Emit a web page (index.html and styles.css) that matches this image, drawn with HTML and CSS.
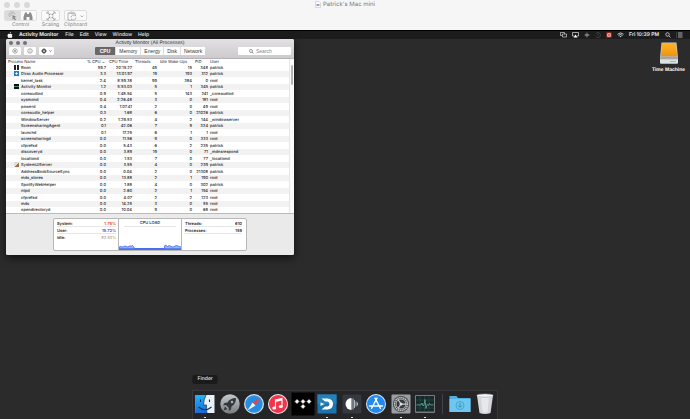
FILE: index.html
```html
<!DOCTYPE html>
<html lang="en">
<head>
<meta charset="utf-8">
<title>Patrick's Mac mini</title>
<link rel="stylesheet" href="styles.css">
</head>
<body>
<header class="viewer">
  <div class="viewer-left">
    <div class="lights light"><i></i><i></i><i></i></div>
    <div class="tools">
      <div class="tool">
        <div class="segmented">
          <button class="on" aria-label="Control"><svg width="10" height="10" viewBox="0 0 20 20"><path d="M9 8l8 4-4 1 3 4-2 2-3-4-2 3z" fill="#888"/><path d="M4 12a6 6 0 1 1 10-5M7 10a3 3 0 1 1 4-4" fill="none" stroke="#aaa" stroke-width="1.5"/></svg></button>
          <button aria-label="Observe"><svg width="10" height="10" viewBox="0 0 20 20" fill="#8c8c8c"><path d="M4 3h4v3h4V3h4l3 9v6h-6v-6H7v6H1v-6z"/></svg></button>
        </div>
        <span>Control</span>
      </div>
      <div class="tool">
        <button class="box" aria-label="Scaling"><svg width="10" height="10" viewBox="0 0 20 20" fill="none" stroke="#999" stroke-width="1.6"><path d="M2 6V2h4M14 2h4v4M18 14v4h-4M6 18H2v-4M4 4l4 4M16 4l-4 4M4 16l4-4M16 16l-4-4M8 5v3H5M12 5v3h3M8 15v-3H5M12 15v-3h3"/></svg></button>
        <span>Scaling</span>
      </div>
      <div class="tool">
        <button class="box wide" aria-label="Clipboard"><svg width="17" height="10" viewBox="0 0 34 20" fill="none" stroke="#999" stroke-width="1.5"><path d="M7 18H2V4h3l2-2h4l2 2h3v3M5 5h8"/><path d="M8 13a5 5 0 0 1 9-3v-3M18 13a5 5 0 0 1-9 3v3M27 9l3 3 3-3"/></svg></button>
        <span>Clipboard</span>
      </div>
    </div>
  </div>
  <h1 class="viewer-title"><svg width="6" height="7" viewBox="0 0 12 14"><path d="M1 1h7l3 3v9H1z" fill="#fff" stroke="#b5b5b5"/><path d="M3 6h6v4H3z" fill="#9c9ccb"/></svg>Patrick's Mac mini</h1>
</header>

<main class="screen">
  <nav class="menubar">
    <svg class="apple" width="6" height="6" viewBox="0 0 12 12" fill="#fff"><path d="M8 0c0 2-1 3-2 3 0-2 1-3 2-3zM6 4c1 0 3-1 5 1-2 1-1 4 0 4-1 2-2 3-3 3l-2-.5L4 12C2 12 1 9 1 7c0-3 3-4 5-3z"/></svg>
    <a href="#" class="app">Activity Monitor</a>
    <a href="#">File</a>
    <a href="#">Edit</a>
    <a href="#">View</a>
    <a href="#">Window</a>
    <a href="#">Help</a>
    <div class="status">
      <svg width="7" height="6" viewBox="0 0 14 12" fill="none" stroke="#ddd" stroke-width="1.3"><path d="M4 7H1V1h8v3M5 4h8v6H5z"/></svg>
      <svg width="7" height="6" viewBox="0 0 14 12"><path d="M4 8H1V1h12v7h-3" fill="none" stroke="#ddd" stroke-width="1.4"/><path d="M7 5l4 6H3z" fill="#fff"/></svg>
      <svg width="6" height="6" viewBox="0 0 12 12" stroke="#aaa" stroke-width="1.3"><path d="M1 6h10M4 3v6M6 1v10M8 4v4"/></svg>
      <svg width="6" height="6" viewBox="0 0 12 12" fill="none" stroke="#555" stroke-width="1.2"><path d="M2 3a5 5 0 1 1-1 4M6 3v3l2 1"/></svg>
      <svg width="6" height="6" viewBox="0 0 12 12"><path fill="#d8382c" d="M1 1h10v10H1z"/><path fill="#fff" d="M3 3h6v6H3z"/><path fill="#d8382c" d="M5 4h2v4H5zM4 5h4v2H4z"/></svg>
      <svg width="7" height="6" viewBox="0 0 14 12" fill="none" stroke="#fff" stroke-width="1.5"><path d="M1 4.500Q7-1 13 4.500M3 7q4-4 8 0"/><path d="M5 8.500q2-1.500 4 0l-2 2z" fill="#fff" stroke="none"/></svg>
      <time>Fri 10:39 PM</time>
      <svg width="6" height="6" viewBox="0 0 12 12" fill="none" stroke="#eee" stroke-width="1.4"><circle cx="5" cy="5" r="3.500"/><path d="M8 8l3 3"/></svg>
      <svg width="7" height="6" viewBox="0 0 14 12" stroke="#ddd" stroke-width="1.5"><path d="M1 2h1M4 2h9M1 6h1M4 6h9M1 10h1M4 10h9"/></svg>
    </div>
  </nav>

  <div class="desktop">
    <section class="window">
      <header class="titlebar">
        <div class="title-row">
          <div class="lights"><i></i><i></i><i></i></div>
          <h2>Activity Monitor (All Processes)</h2>
        </div>
        <div class="toolbar">
          <div class="actions">
            <button class="tb" aria-label="Quit process"><svg width="6" height="6" viewBox="0 0 12 12" fill="none" stroke="#888" stroke-width="1.400"><circle cx="6" cy="6" r="4.500"/><path d="M4 4l4 4M8 4l-4 4"/></svg></button>
            <button class="tb" aria-label="Inspect process"><svg width="6" height="6" viewBox="0 0 12 12" fill="none" stroke="#888" stroke-width="1.400"><circle cx="6" cy="6" r="4.500"/><path d="M6 3v1M6 5v4"/></svg></button>
            <button class="tb gear" aria-label="Actions"><svg width="12" height="6" viewBox="0 0 24 12" fill="none" stroke="#444"><circle cx="6" cy="6" r="3" stroke-width="2.500"/><path d="M6 0v2M6 10v2M0 6h2M10 6h2M2 2l1 1M10 10L9 9M10 2L9 3M2 10l1-1" stroke-width="1.500"/><path d="M17 5l2 2 2-2" stroke-width="1.400"/></svg></button>
          </div>
          <div class="tabs">
            <button class="on">CPU</button><button>Memory</button><button>Energy</button><button>Disk</button><button>Network</button>
          </div>
          <label class="search"><svg width="5" height="5" viewBox="0 0 10 10" fill="none" stroke="#666" stroke-width="1.300"><circle cx="4" cy="4" r="3"/><path d="M6 6l3 3"/></svg><input type="text" placeholder="Search" aria-label="Search"></label>
        </div>
      </header>

      <div class="list">
        <table>
          <colgroup><col class="c-name"><col class="c-cpu"><col class="c-time"><col class="c-threads"><col class="c-idle"><col class="c-pid"><col></colgroup>
          <thead><tr><th>Process Name</th><th>% CPU ⌄</th><th>CPU Time</th><th>Threads</th><th>Idle Wake Ups</th><th>PID</th><th>User</th></tr></thead>
          <tbody>
            <tr><td><i class="ico roon"></i>Roon</td><td>59.7</td><td>20:15.27</td><td>45</td><td>15</td><td>348</td><td>patrick</td></tr>
            <tr><td><i class="ico dirac"></i>Dirac Audio Processor</td><td>3.3</td><td>13:01.97</td><td>19</td><td>193</td><td>312</td><td>patrick</td></tr>
            <tr><td><i class="ico"></i>kernel_task</td><td>2.4</td><td>8:59.38</td><td>99</td><td>384</td><td>0</td><td>root</td></tr>
            <tr><td><i class="ico monitor"></i>Activity Monitor</td><td>1.2</td><td>5:53.03</td><td>5</td><td>1</td><td>345</td><td>patrick</td></tr>
            <tr><td><i class="ico"></i>coreaudiod</td><td>0.9</td><td>1:48.54</td><td>5</td><td>143</td><td>241</td><td>_coreaudiod</td></tr>
            <tr><td><i class="ico"></i>sysmond</td><td>0.4</td><td>2:26.48</td><td>3</td><td>0</td><td>181</td><td>root</td></tr>
            <tr><td><i class="ico"></i>powerd</td><td>0.4</td><td>1:07.41</td><td>2</td><td>0</td><td>49</td><td>root</td></tr>
            <tr><td><i class="ico"></i>coreaudio_helper</td><td>0.3</td><td>1.68</td><td>6</td><td>0</td><td>21026</td><td>patrick</td></tr>
            <tr><td><i class="ico"></i>WindowServer</td><td>0.2</td><td>1:29.53</td><td>4</td><td>2</td><td>144</td><td>_windowserver</td></tr>
            <tr><td><i class="ico"></i>ScreensharingAgent</td><td>0.1</td><td>42.06</td><td>7</td><td>9</td><td>334</td><td>patrick</td></tr>
            <tr><td><i class="ico"></i>launchd</td><td>0.1</td><td>17.25</td><td>6</td><td>1</td><td>1</td><td>root</td></tr>
            <tr><td><i class="ico"></i>screensharingd</td><td>0.0</td><td>11.56</td><td>9</td><td>0</td><td>333</td><td>root</td></tr>
            <tr><td><i class="ico"></i>cfprefsd</td><td>0.0</td><td>5.43</td><td>6</td><td>2</td><td>235</td><td>patrick</td></tr>
            <tr><td><i class="ico"></i>discoveryd</td><td>0.0</td><td>3.89</td><td>19</td><td>0</td><td>71</td><td>_mdnsrespond</td></tr>
            <tr><td><i class="ico"></i>locationd</td><td>0.0</td><td>1.53</td><td>7</td><td>0</td><td>77</td><td>_locationd</td></tr>
            <tr><td><i class="ico system"></i>SystemUIServer</td><td>0.0</td><td>3.55</td><td>4</td><td>0</td><td>239</td><td>patrick</td></tr>
            <tr><td><i class="ico"></i>AddressBookSourceSync</td><td>0.0</td><td>0.04</td><td>2</td><td>0</td><td>21308</td><td>patrick</td></tr>
            <tr><td><i class="ico"></i>mds_stores</td><td>0.0</td><td>13.88</td><td>2</td><td>1</td><td>190</td><td>root</td></tr>
            <tr><td><i class="ico"></i>SpotifyWebHelper</td><td>0.0</td><td>1.88</td><td>4</td><td>0</td><td>302</td><td>patrick</td></tr>
            <tr><td><i class="ico"></i>ntpd</td><td>0.0</td><td>2.60</td><td>2</td><td>1</td><td>154</td><td>root</td></tr>
            <tr><td><i class="ico"></i>cfprefsd</td><td>0.0</td><td>4.07</td><td>2</td><td>2</td><td>123</td><td>root</td></tr>
            <tr><td><i class="ico"></i>mds</td><td>0.0</td><td>14.25</td><td>3</td><td>0</td><td>55</td><td>root</td></tr>
            <tr><td><i class="ico"></i>opendirectoryd</td><td>0.0</td><td>10.04</td><td>9</td><td>0</td><td>68</td><td>root</td></tr>
          </tbody>
        </table>
        <div class="scroll"><i></i></div>
      </div>

      <footer class="summary">
        <div class="panel">
          <dl>
            <div><dt>System:</dt><dd class="red">1.75%</dd></div>
            <div><dt>User:</dt><dd class="blue">15.72%</dd></div>
            <div><dt>Idle:</dt><dd class="grey">82.53%</dd></div>
          </dl>
          <figure>
            <figcaption>CPU LOAD</figcaption>
            <svg viewBox="0 0 64 5" width="64" height="5" preserveAspectRatio="none"><path d="M0 4.500V3l2-.5 2 .5 2-1 3 1 2-1 2 0 1-.5 1 1 1 2h31V2l1-1 2 1.500 2-1 3 1.500 2-.5 2-1 2 .5 2 1 2-1V4.500z" fill="#9db4f5" stroke="#3f67ee" stroke-width=".8"/></svg>
          </figure>
          <dl>
            <div><dt>Threads:</dt><dd>610</dd></div>
            <div><dt>Processes:</dt><dd>159</dd></div>
          </dl>
        </div>
      </footer>
    </section>

    <a href="#" class="drive">
      <svg width="20" height="22" viewBox="0 0 40 44"><defs><linearGradient id="or" x2="0" y2="1"><stop stop-color="#fdb62b"/><stop offset="1" stop-color="#ee920c"/></linearGradient></defs><path d="M5 1h30l3 31v9q0 2-2 2H4q-2 0-2-2v-9z" fill="#c9cdce"/><path d="M6 2h28l2 27H4z" fill="url(#or)"/><path d="M3 29h34l1 6H2z" fill="#a3a5a6"/><path d="M2 35h36v6q0 2-2 2H4q-2 0-2-2z" fill="#dce3e5"/><path d="M22 39h12" stroke="#a9b7b5" stroke-width="2"/></svg>
      <span>Time Machine</span>
    </a>
  </div>

  <footer class="dock-area">
    <div class="dock">
      <a href="#" class="run" aria-label="Finder"><span class="tip">Finder</span><svg viewBox="0 0 40 40"><defs><linearGradient id="fb" x2="0" y2="1"><stop stop-color="#20b7f8"/><stop offset="1" stop-color="#1769df"/></linearGradient></defs><path d="M1 2h38v36H1z" fill="#e9f0f7"/><path d="M1 2h21q-5 10-5 20h6q-1 8 1 16H1z" fill="url(#fb)"/><path d="M22 2q-5 10-5 20h6q-1 8 1 16" fill="none" stroke="#183a5c" stroke-width="1.500"/><path d="M11 11v5M29 11v5M7 26q13 11 26 0" fill="none" stroke="#14304e" stroke-width="2.200"/></svg></a>
      <a href="#" aria-label="Launchpad"><svg viewBox="0 0 40 40"><defs><linearGradient id="lp" x2="0" y2="1"><stop stop-color="#c5c9cc"/><stop offset="1" stop-color="#777c80"/></linearGradient></defs><circle cx="20" cy="20" r="19.500" fill="url(#lp)"/><path d="M32 8q-12 0-17 9l-6 1-3 5 6-1 6 6-1 6 5-3 1-6q9-5 9-17zM10 25l5 5-8 3z" fill="#33383c"/><circle cx="24" cy="16" r="2.500" fill="#aeb3b6"/></svg></a>
      <a href="#" aria-label="Safari"><svg viewBox="0 0 40 40"><circle cx="20" cy="20" r="20" fill="#dadfe4"/><circle cx="20" cy="20" r="17.500" fill="#238be3"/><circle cx="20" cy="20" r="14.500" fill="none" stroke="#8bcaf8" stroke-dasharray="1 3"/><path d="M33 7L17 17l6 6z" fill="#ef4238"/><path d="M7 33l10-16 6 6z" fill="#f4f4f4"/></svg></a>
      <a href="#" aria-label="iTunes"><svg viewBox="0 0 40 40"><circle cx="20" cy="20" r="20" fill="#eee"/><circle cx="20" cy="20" r="18" fill="#f3344b"/><path d="M15 28V12l13-3v16" fill="none" stroke="#fff" stroke-width="2.200"/><path d="M15 12l13-3v4l-13 3z" fill="#fff"/><ellipse cx="12.500" cy="28" rx="4" ry="3" fill="#fff"/><ellipse cx="25.500" cy="25" rx="4" ry="3" fill="#fff"/></svg></a>
      <a href="#" aria-label="Tidal"><svg viewBox="0 0 40 40"><path d="M-3-3h46v46H-3z" fill="#000"/><path d="M8 11l4 4-4 4-4-4zM20 11l4 4-4 4-4-4zM32 11l4 4-4 4-4-4zM20 21l4 4-4 4-4-4z" fill="#fff" stroke="#fff"/></svg></a>
      <a href="#" class="run" aria-label="Dirac"><svg viewBox="0 0 40 40"><path d="M1 1h38v38H1z" fill="#1b74ad"/><path d="M1 1h38v19H1z" fill="#2482bb"/><path d="M9 9h12q11 1 11 11T21 31H9l7-6h5q4-1 4-5t-4-5h-5z" fill="#fff"/><path d="M7 17l8 3-8 4z" fill="#fff"/></svg></a>
      <a href="#" class="run" aria-label="Roon"><svg viewBox="0 0 40 40"><rect x="1" y="1" width="38" height="38" rx="3" fill="#35393f"/><path d="M19 8v24a12 12 0 0 1 0-24z" fill="#fff"/><path d="M22 9v22M25 12v16M28 15v10M31 17v6" stroke="#bfc2c6" stroke-width="1.800"/></svg></a>
      <a href="#" aria-label="App Store"><svg viewBox="0 0 40 40"><circle cx="20" cy="20" r="20" fill="#dbe7f2"/><circle cx="20" cy="20" r="18" fill="#208af0"/><path d="M22 8L11 29M18 8l11 21M7 24h26" fill="none" stroke="#fff" stroke-width="2.800" stroke-linecap="round"/></svg></a>
      <a href="#" class="run" aria-label="System Preferences"><svg viewBox="0 0 40 40"><rect x="1" y="1" width="38" height="38" rx="2" fill="#9b9fa2"/><circle cx="20" cy="20" r="16" fill="#36393c"/><circle cx="20" cy="20" r="13" fill="none" stroke="#c3c6c8" stroke-width="3" stroke-dasharray="3 1"/><circle cx="20" cy="20" r="10" fill="none" stroke="#b4b7b9" stroke-width="2"/><path d="M20 20h11M20 20l-6-9M20 20l-6 9" stroke="#ccc" stroke-width="2.500"/><circle cx="20" cy="20" r="3" fill="#ddd"/></svg></a>
      <a href="#" class="run" aria-label="Activity Monitor"><svg viewBox="0 0 40 40"><rect x="0" y="2" width="40" height="36" rx="2" fill="#777b7c"/><path d="M2 4h36v31H2z" fill="#17282a"/><path d="M2 12h36M2 20h36M2 28h36M10 4v31M19 4v31M28 4v31" stroke="#32504d"/><path d="M3 22h9l2-4 2 6 2-2 2-11 2 18 2-8 3 2 2-4 2 3h6" fill="none" stroke="#5fb19c" stroke-width="1.500"/></svg></a>
      <i class="sep"></i>
      <a href="#" aria-label="Downloads"><svg viewBox="0 0 40 40"><path d="M-1 4h14l3 4h25v28H-1z" fill="#50afe0"/><path d="M-1 10h42v26H-1z" fill="#6dc7f1"/><circle cx="20" cy="23" r="8" fill="none" stroke="#439fca" stroke-width="1.800"/><path d="M20 18v8M16 23l4 4 4-4" fill="none" stroke="#398fbb" stroke-width="2"/></svg></a>
      <a href="#" aria-label="Trash"><svg viewBox="0 0 40 40"><path d="M4 3l5 35q11 4 22 0l5-35z" fill="#d3d6d8"/><path d="M12 8l3 29h10l3-29z" fill="#e6e8e9"/><ellipse cx="20" cy="3" rx="16.500" ry="3" fill="#f4f5f6" stroke="#bfc2c4"/></svg></a>
    </div>
  </footer>
</main>
</body>
</html>
```
FILE: styles.css
```css
* { box-sizing: border-box; }

body {
  margin: 0;
  min-height: 100vh;
  display: flex;
  flex-direction: column;
  font: 5px/8px Inter, "Liberation Sans", sans-serif;
  text-rendering: geometricPrecision;
  color: #222;
  background: #2b2b2b;
}

h1, h2, dl, dd, figure { margin: 0; }
h1, h2 { font-weight: 400; }
svg { display: block; flex: none; }
a { color: inherit; text-decoration: none; }

button {
  display: flex;
  align-items: center;
  justify-content: center;
  margin: 0;
  padding: 0;
  border: 0;
  background: #fff;
  font: inherit;
  color: inherit;
}

/* Screen sharing toolbar */
.viewer {
  display: grid;
  grid-template-columns: 1fr auto 1fr;
  height: 30px;
  background: #f6f6f6;
}
.viewer-left { padding: 2px 4px 0; }
.viewer-title {
  display: flex;
  align-items: center;
  gap: 2px;
  height: 9px;
  font-size: 6px;
  color: #777;
}
.lights { display: flex; gap: 3px; }
.lights i {
  width: 4px;
  height: 4px;
  border-radius: 50%;
  background: #747274;
}
.viewer-left .lights { gap: 4px; height: 8px; }
.lights.light i { width: 6px; height: 6px; background: #d9d9d9; }

.tools { display: flex; gap: 4px; }
.tool { text-align: center; color: #858585; }
.segmented {
  display: flex;
  width: 33px;
  border: 1px solid #dedede;
  border-radius: 2px;
}
.segmented button { flex: 1; height: 9px; background: #fafafa; }
.segmented .on { background: #dcdcdc; }
.box {
  width: 19px;
  height: 11px;
  margin: 0 auto;
  border: 1px solid #dedede;
  border-radius: 2px;
  background: #fafafa;
}
.box.wide { width: 23px; }

/* Remote screen */
.screen {
  flex: 1;
  display: flex;
  flex-direction: column;
  border-top: 1px solid #000;
}
.menubar {
  display: flex;
  align-items: center;
  gap: 6px;
  height: 8px;
  padding: 0 7px;
  background: #1c1c1d;
  color: #eee;
  font-weight: 500;
}
.menubar .app { font-weight: 700; padding-right: 1px; }
.status { display: flex; align-items: center; gap: 5px; margin-left: auto; }
.status time { font-weight: 600; padding-right: 1px; }

.desktop {
  flex: 1;
  display: flex;
  justify-content: space-between;
  align-items: flex-start;
  padding: 0 5px 0 6px;
}
.drive {
  display: flex;
  flex-direction: column;
  align-items: center;
  gap: 2px;
  padding-top: 3px;
  color: #fff;
  font-family: "Liberation Sans", sans-serif;
  font-weight: 700;
}

/* Activity Monitor window */
.window {
  width: 288px;
  border-radius: 2px;
  overflow: hidden;
  background: #fff;
  box-shadow: 0 3px 8px #0009;
}
.titlebar {
  padding: 0 3px;
  background: linear-gradient(#e3e1e3, #cccacc);
  border-bottom: 1px solid #b5b3b5;
  font-family: "Liberation Sans", sans-serif;
}
.title-row,
.toolbar {
  display: grid;
  grid-template-columns: 1fr auto 1fr;
}
.title-row { align-items: center; height: 8px; }
.title-row h2 { font-size: 5px; color: #333; }
.toolbar { height: 11px; }
.actions { display: flex; gap: 3px; }
.tb { width: 12px; height: 8px; border-radius: 1px; }
.tb.gear { width: 15px; }
.tabs {
  display: flex;
  height: 8px;
  border-radius: 1px;
  overflow: hidden;
  background: #fff;
}
.tabs button { padding: 0 3px; border-left: 1px solid #ddd; color: #333; }
.tabs .on { padding: 0 5px; border: 0; background: #69676a; color: #fff; font-weight: 700; }
.search {
  display: flex;
  align-items: center;
  justify-content: center;
  gap: 2px;
  justify-self: end;
  width: 53px;
  height: 8px;
  border-radius: 1px;
  background: #fff;
}
.search input {
  width: 24px;
  height: 8px;
  padding: 0;
  border: 0;
  outline: 0;
  background: none;
  font: inherit;
}
.search input::placeholder { color: #888; }

.list { display: flex; border-bottom: 1px solid #bbb; }
table {
  flex: 1;
  width: 0;
  table-layout: fixed;
  border-collapse: collapse;
  font-size: 4px;
  line-height: 6px;
  font-weight: 500;
}
.c-name { width: 81px; }
.c-cpu { width: 21px; }
.c-time { width: 26px; }
.c-threads { width: 25px; }
.c-idle { width: 35px; }
.c-pid { width: 14px; }
th, td { padding: 0; text-align: right; white-space: nowrap; }
th { height: 5px; line-height: 5px; text-align: left; font-weight: 400; }
td { padding-right: 2px; }
td:nth-child(6) { padding-right: 0; }
th:first-child, td:first-child { padding-left: 2px; text-align: left; }
th:nth-child(n+3) { padding-left: 1px; }
th:last-child, td:last-child { padding-left: 2px; text-align: left; }
tbody tr { height: 6px; }
tbody tr:nth-child(odd):not(:last-child) { height: 7px; }
tbody tr:nth-child(even) { background: #f3f2f3; }
.ico {
  display: inline-block;
  width: 5px;
  height: 5px;
  margin: 0 2px 0 6px;
  vertical-align: top;
}
.roon { background: linear-gradient(90deg, #20222c 40%, #fff 40% 65%, #20222c 65%); }
.dirac { background: radial-gradient(circle, #fff 25%, #1b82bd 35%); }
.monitor { background: linear-gradient(#111 45%, #4b8b76 45% 60%, #111 60%); }
.system { background: linear-gradient(135deg, #ddd 50%, #a8713c 55%); }
.scroll {
  width: 5px;
  padding: 6px 1px 0;
  border-left: 1px solid #e6e6e6;
  background: #fafafa;
}
.scroll i { display: block; width: 2px; height: 20px; border-radius: 1px; background: #b5b5b5; }

.summary { padding: 4px 47px; background: #ebeaeb; }
.panel {
  display: grid;
  grid-template-columns: 1fr 1fr 1fr;
  height: 33px;
  border: 1px solid #b8b8b8;
  border-radius: 2px;
  background: #fff;
  font-size: 4px;
  line-height: 7px;
  font-weight: 600;
}
.panel dl { padding: 1px 2px 0 3px; }
.panel dl div { display: flex; justify-content: space-between; border-bottom: 1px solid #e7e7e7; height: 7px; }
.panel dl:first-child div:last-child { border: 0; }
.panel dl:last-child { padding-right: 4px; }
.red { color: #e8302c; }
.blue { color: #2a45ea; }
.grey { color: #999; font-weight: 400; }
.panel figure {
  display: flex;
  flex-direction: column;
  justify-content: space-between;
  border: solid #b8b8b8;
  border-width: 0 1px;
  text-align: center;
  font-weight: 500;
}
.panel figcaption { height: 8px; margin: 0 5px; border-bottom: 1px solid #e7e7e7; }
.panel figure svg { width: 100%; height: 6px; border-bottom: 1px solid #e0453f; }

/* Dock */
.dock-area { display: flex; justify-content: center; }
.dock {
  display: grid;
  grid-template-columns: repeat(10, 1fr) 11px repeat(2, 1fr);
  width: 306px;
  height: 29px;
  padding-top: 3px;
  border: 1px solid #38373b;
  border-bottom: 0;
  background: #252427;
}
.dock a { position: relative; display: flex; flex-direction: column; align-items: center; }
.dock svg { width: 20px; height: 20px; overflow: visible; }
.dock .run::after {
  content: "";
  width: 2px;
  height: 1px;
  margin-top: 3px;
  background: #ddd;
}
.sep { width: 1px; height: 20px; margin: 0 auto; background: #444347; }
.tip {
  position: absolute;
  bottom: 100%;
  left: 50%;
  transform: translateX(-50%);
  margin-bottom: 10px;
  padding: 0 5px;
  border-radius: 2px;
  background: #1a1a1b;
  color: #e6e6e6;
  line-height: 9px;
  font-weight: 500;
}
```
